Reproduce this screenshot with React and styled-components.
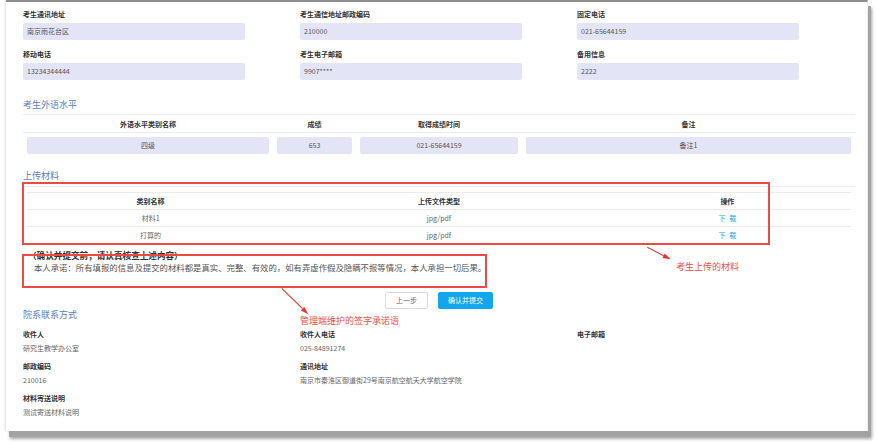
import React from 'react';
import styled, { createGlobalStyle } from 'styled-components';

const GlobalStyle = createGlobalStyle`
  html, body {
    margin: 0;
    padding: 0;
    background: #fff;
  }
  body {
    font-family: "Noto Sans CJK SC", "Noto Sans", sans-serif;
    color: #333;
  }
  * { box-sizing: border-box; }
`;

const Page = styled.div`
  width: 877px;
  height: 443px;
  overflow: hidden;
  padding-left: 6px;
`;

const Frame = styled.div`
  position: relative;
  width: 862px;
  height: 431px;
  border-top: 2px solid #8e8e8e;
  border-right: 1px solid #f0f0f0;
  background: #fff;
  box-shadow: 3px 6px 0 0 #a3a3a3, 4px 8px 3px rgba(0, 0, 0, 0.35),
    -1px 0 2px rgba(0, 0, 0, 0.12);
`;

const Content = styled.div`
  width: 849px;
  padding: 7px 0 0 17px;
`;

const FieldGrid = styled.div`
  display: grid;
  grid-template-columns: repeat(3, 277px);
  row-gap: ${p => p.$gap || 9}px;
  margin-top: ${p => p.$top || 0}px;
`;

const Field = styled.div`
  display: flex;
  flex-direction: column;
`;

const FieldLabel = styled.div`
  font-size: 7px;
  font-weight: 700;
  line-height: 10px;
  margin-bottom: 4px;
  color: #333;
  white-space: nowrap;
`;

const InputBox = styled.div`
  width: ${p => p.$width || '222px'};
  height: 17px;
  line-height: 17px;
  padding: 0 4px;
  font-size: 7px;
  color: #555;
  background: #e4e4f7;
  border-radius: 2px;
  text-align: ${p => (p.$center ? 'center' : 'left')};
  white-space: nowrap;
`;

const SectionTitle = styled.div`
  margin-top: ${p => p.$top || 0}px;
  font-size: 9px;
  line-height: 12px;
  color: #5b7dc4;
  padding-bottom: ${p => p.$pad || 0}px;
  border-bottom: ${p => (p.$line ? '1px solid #ececec' : 'none')};
`;

const LangTable = styled.div`
  display: grid;
  grid-template-columns: 250px 83px 166px 333px;
`;

const HeadCell = styled.div`
  height: ${p => p.$h || 18}px;
  line-height: ${p => p.$h || 18}px;
  font-size: 7px;
  font-weight: 700;
  color: #333;
  text-align: center;
  border-bottom: 1px solid #ececec;
  white-space: nowrap;
`;

const BoxCell = styled.div`
  padding: 4px;
`;

const FileTable = styled.div`
  margin: 5px 4px 0;
  border-top: 1px solid #ececec;
  display: grid;
  grid-template-columns: 30% 40% 30%;
`;

const Cell = styled.div`
  height: 17px;
  line-height: 17px;
  font-size: 7px;
  color: #666;
  text-align: center;
  border-bottom: ${p => (p.$last ? 'none' : '1px solid #ececec')};
`;

const DownloadLink = styled.a`
  color: #2a9fe0;
  text-decoration: none;
  word-spacing: 2px;
`;

const Confirm = styled.div`
  margin-top: 5px;
`;

const ConfirmTitle = styled.div`
  font-size: 8.6px;
  font-weight: 700;
  line-height: 12px;
  color: #333;
  padding-left: 5px;
`;

const Promise = styled.div`
  font-size: 8.4px;
  line-height: 12px;
  color: #555;
  padding-left: 11px;
  white-space: nowrap;
`;

const ButtonRow = styled.div`
  margin-top: 19px;
  width: 832px;
  display: flex;
  justify-content: center;
  gap: 10px;
`;

const Button = styled.button`
  height: 17px;
  padding: 0 ${p => (p.$primary ? 9 : 10)}px;
  font-family: inherit;
  font-size: 7px;
  line-height: 15px;
  border-radius: 2px;
  border: 1px solid ${p => (p.$primary ? '#14a6ec' : '#dcdcdc')};
  background: ${p => (p.$primary ? '#14a6ec' : '#fff')};
  color: ${p => (p.$primary ? '#fff' : '#666')};
  cursor: pointer;
`;

const InfoLabel = styled.div`
  font-size: 7px;
  font-weight: 700;
  line-height: 14px;
  color: #333;
  white-space: nowrap;
`;

const InfoValue = styled.div`
  font-size: 7px;
  line-height: 14px;
  color: #666;
  min-height: 14px;
  white-space: nowrap;
`;

const RedBox = styled.div`
  position: absolute;
  left: ${p => p.$x}px;
  top: ${p => p.$y}px;
  width: ${p => p.$w}px;
  height: ${p => p.$h}px;
  border: 2px solid #ec4a45;
  pointer-events: none;
`;

const Arrow = styled.svg`
  position: absolute;
  left: ${p => p.$x}px;
  top: ${p => p.$y}px;
  overflow: visible;
`;

const Note = styled.div`
  position: absolute;
  left: ${p => p.$x}px;
  top: ${p => p.$y}px;
  font-size: 9px;
  line-height: 12px;
  color: #ef4f4a;
  white-space: nowrap;
`;

const fields = [
  { label: '考生通讯地址', value: '南京雨花台区' },
  { label: '考生通信地址邮政编码', value: '210000' },
  { label: '固定电话', value: '021-65644159' },
  { label: '移动电话', value: '13234344444' },
  { label: '考生电子邮箱', value: '9907****' },
  { label: '备用信息', value: '2222' },
];

const langCols = [
  { head: '外语水平类别名称', value: '四级' },
  { head: '成绩', value: '653' },
  { head: '取得成绩时间', value: '021-65644159' },
  { head: '备注', value: '备注1' },
];

const files = [
  { name: '材料1', type: 'jpg/pdf' },
  { name: '打算的', type: 'jpg/pdf' },
];

const contacts = [
  { label: '收件人', value: '研究生教学办公室' },
  { label: '收件人电话', value: '025-84891274' },
  { label: '电子邮箱', value: '' },
  { label: '邮政编码', value: '210016' },
  { label: '通讯地址', value: '南京市秦淮区御道街29号南京航空航天大学航空学院' },
  { label: '', value: '' },
  { label: '材料寄送说明', value: '测试寄送材料说明' },
];

export default function App() {
  return (
    <>
      <GlobalStyle />
      <Page>
        <Frame>
          <Content>
            <FieldGrid>
              {fields.map(f => (
                <Field key={f.label}>
                  <FieldLabel>{f.label}</FieldLabel>
                  <InputBox>{f.value}</InputBox>
                </Field>
              ))}
            </FieldGrid>

            <SectionTitle $top={19} $pad={3} $line>考生外语水平</SectionTitle>
            <LangTable>
              {langCols.map(c => (
                <HeadCell key={c.head}>{c.head}</HeadCell>
              ))}
              {langCols.map(c => (
                <BoxCell key={c.head + 'v'}>
                  <InputBox $width="100%" $center>{c.value}</InputBox>
                </BoxCell>
              ))}
            </LangTable>

            <SectionTitle $top={12} $pad={4} $line>上传材料</SectionTitle>
            <FileTable>
              <HeadCell $h={17}>类别名称</HeadCell>
              <HeadCell $h={17}>上传文件类型</HeadCell>
              <HeadCell $h={17}>操作</HeadCell>
              {files.map((f, i) => (
                <React.Fragment key={f.name}>
                  <Cell $last={i === files.length - 1}>{f.name}</Cell>
                  <Cell $last={i === files.length - 1}>{f.type}</Cell>
                  <Cell $last={i === files.length - 1}>
                    <DownloadLink href="#">下 载</DownloadLink>
                  </Cell>
                </React.Fragment>
              ))}
            </FileTable>

            <Confirm>
              <ConfirmTitle>（确认并提交前，请认真核查上述内容）</ConfirmTitle>
              <Promise>
                本人承诺：所有填报的信息及提交的材料都是真实、完整、有效的，如有弄虚作假及隐瞒不报等情况，本人承担一切后果。
              </Promise>
            </Confirm>

            <ButtonRow>
              <Button>上一步</Button>
              <Button $primary>确认并提交</Button>
            </ButtonRow>

            <SectionTitle>院系联系方式</SectionTitle>
            <FieldGrid $gap={4} $top={6}>
              {contacts.map((c, i) => (
                <Field key={i}>
                  <InfoLabel>{c.label}</InfoLabel>
                  <InfoValue>{c.value}</InfoValue>
                </Field>
              ))}
            </FieldGrid>
          </Content>

          {/* annotation overlays */}
          <RedBox $x={16} $y={180} $w={748} $h={63} />
          <RedBox $x={16} $y={252} $w={465} $h={34} />

          <Arrow $x={639} $y={243} width="28" height="17" viewBox="0 0 28 17">
            <line x1="2.3" y1="2.3" x2="18.6" y2="10.65" stroke="#e8322f" strokeWidth="1.1" />
            <polygon points="25.7,14.3 17.46,12.88 19.74,8.42" fill="#e8322f" />
          </Arrow>
          <Note $x={670} $y={259}>考生上传的材料</Note>

          <Arrow $x={274} $y={284} width="30" height="30" viewBox="0 0 30 30">
            <line x1="1.7" y1="2.3" x2="22.58" y2="22.71" stroke="#e8322f" strokeWidth="1.1" />
            <polygon points="28.3,28.3 20.83,24.5 24.33,20.92" fill="#e8322f" />
          </Arrow>
          <Note $x={294} $y={313}>管理端维护的签字承诺语</Note>
        </Frame>
      </Page>
    </>
  );
}
